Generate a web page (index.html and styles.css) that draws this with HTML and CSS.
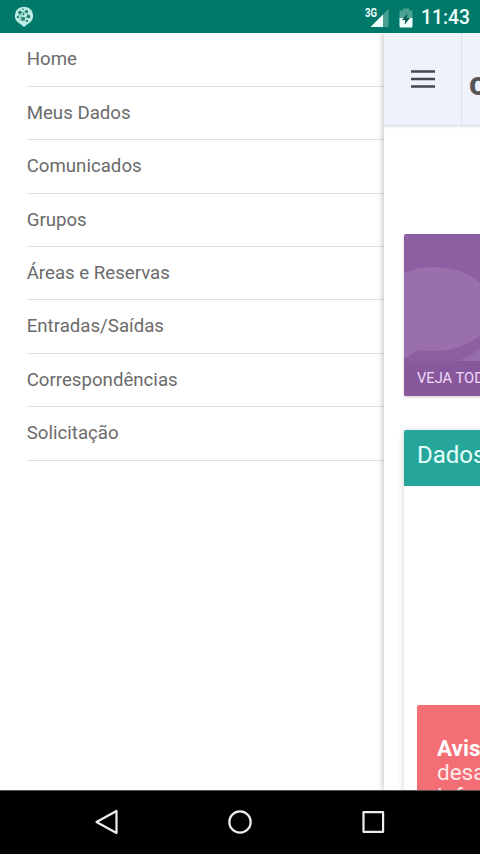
FILE: index.html
```html
<!DOCTYPE html>
<html lang="pt-BR">
<head>
<meta charset="utf-8">
<title>Menu</title>
<link rel="stylesheet" href="styles.css">
</head>
<body>
<div class="screen">
  <header class="status">
    <svg class="app-icon" width="20" height="22" viewBox="0 0 20 22">
      <path d="M10 .8a9 9 0 0 1 4.500 16.800L10 21l-4.500-3.400A9 9 0 0 1 10 .8z" fill="#b9eee5"/>
      <g fill="#17685e"><circle cx="6" cy="6.500" r="1.700"/><circle cx="12.500" cy="5.500" r="1.500"/><circle cx="14.500" cy="10.500" r="1.700"/><circle cx="9" cy="12.800" r="1.900"/><circle cx="3.800" cy="11" r="1.100"/><circle cx="13" cy="15" r="1"/><circle cx="9" cy="3.300" r=".8"/><circle cx="9.500" cy="8.300" r="1"/></g>
      <path d="M6 7l6-1.500 2.500 5-6 2zM4 11l4.500 1.500 4 2.500M6 7l-2 4M6 15l3-2" fill="none" stroke="#43998c" stroke-width=".7"/>
    </svg>
    <svg class="signal" width="26" height="22" viewBox="0 0 26 22">
      <path d="M23.500 2v18h-18z" fill="#4aa091"/>
      <path d="M18 7.500V20H5.500z" fill="#effffc"/>
      <text class="network" x="0" y="10" textLength="12" lengthAdjust="spacingAndGlyphs">3G</text>
    </svg>
    <svg class="battery" width="14" height="20" viewBox="0 0 14 20">
      <path d="M4 .5h6v2h3.500V11H.5V2.500H4z" fill="#4da292"/>
      <path d="M.5 10h13v8.500q0 1-1 1h-11q-1 0-1-1z" fill="#effffc"/>
      <path d="M8.500 5.200L3 12h3.300l-.8 4.800L11 10H7.700z" fill="#075e50"/>
    </svg>
    <time class="clock">11:43</time>
  </header>
  <div class="app">
    <nav class="drawer">
      <a class="item">Home</a>
      <a class="item">Meus Dados</a>
      <a class="item">Comunicados</a>
      <a class="item">Grupos</a>
      <a class="item">Áreas e Reservas</a>
      <a class="item">Entradas/Saídas</a>
      <a class="item">Correspondências</a>
      <a class="item">Solicitação</a>
    </nav>
    <main class="page">
      <div class="toolbar">
        <div class="menu-button">
          <svg width="24" height="18" viewBox="0 0 24 18"><path d="M0 1.500h24M0 9h24M0 16.500h24"/></svg>
        </div>
        <div class="brand">c</div>
      </div>
      <section class="tile">
        <svg class="bubbles" width="160" height="127" viewBox="0 0 160 127">
          <path d="M53 127C68 122 79 114 90 97l20 30z" fill="#986dac"/>
          <path d="M0 39C9 35 19 33 30 33c33 0 59 19 59 42s-26 42-59 42q-7 0-14-1C10 118 6 122 0 124z" fill="#9a70ac"/>
        </svg>
        <div class="tile-action">VEJA TODOS</div>
      </section>
      <section class="card">
        <h2 class="card-title">Dados</h2>
        <div class="notice"><b>Aviso</b><br>desatualizado<br>informe</div>
      </section>
    </main>
  </div>
  <footer class="navbar">
    <svg width="26" height="28" viewBox="0 0 26 28"><path d="M22.500 3v22L2.500 14z"/></svg>
    <svg width="26" height="28" viewBox="0 0 26 28"><circle cx="13" cy="14" r="10.700"/></svg>
    <svg width="26" height="28" viewBox="0 0 26 28"><path d="M3.500 4.200h19.600v19.600H3.500z"/></svg>
  </footer>
</div>
</body>
</html>
```
FILE: styles.css
```css
* { box-sizing: border-box; }
body { margin: 0; font-family: Roboto, "Liberation Sans", sans-serif; background: #fff; }
.screen { width: 480px; height: 854px; display: flex; flex-direction: column; overflow: hidden; }
.status { height: 33px; flex: none; background: #00796b; display: flex; align-items: center; padding: 0 10px 0 14px; }
.signal { margin-left: auto; overflow: visible; margin-top: 2px; }
.network { font-size: 12px; font-weight: 700; fill: #effffc; }
.battery { margin-left: 8px; margin-top: 2px; }
.clock { margin-left: 8px; width: 49px; color: #effffc; font-size: 19.300px; font-weight: 500; line-height: 33px; padding-top: 2px; white-space: nowrap; }
.app { flex: 1; min-height: 0; display: flex; overflow: hidden; }
.drawer { width: 384px; flex: none; padding: .4px 0 0 26.700px; }
.item { display: block; height: 53.400px; border-bottom: 1px solid #e0e0e0; font-size: 18.670px; line-height: 52px; color: #6b6b6b; white-space: nowrap; }
.page { width: 96px; flex: none; background: #fff; box-shadow: 0 0 7px rgba(0,0,0,.32); overflow: hidden; }
.toolbar { height: 93px; background: #eff1fb; border-bottom: 1px solid #dcdee7; box-shadow: 0 1px 3px rgba(0,0,0,.1); display: flex; }
.menu-button { width: 77px; flex: none; padding: 37px 0 0 27px; }
.menu-button svg { display: block; fill: none; stroke: #47474d; stroke-width: 2.500px; }
.brand { width: 60px; flex: none; border-left: 1px solid #dfe1ea; padding-left: 7px; font: 700 34px/100px Roboto, sans-serif; color: #56565a; }
.tile { width: 160px; height: 162px; margin: 108px 0 0 20px; border-radius: 2px; background: #8e5ea2; box-shadow: 0 1px 3px rgba(0,0,0,.2); overflow: hidden; }
.bubbles { display: block; }
.tile-action { height: 35px; padding-left: 13px; background: #88589d; color: #efd9f7; font-size: 14.670px; line-height: 35px; }
.card { width: 400px; height: 500px; margin: 34px 0 0 20px; border-radius: 2px; box-shadow: 0 1px 6px rgba(0,0,0,.2); }
.card-title { height: 56px; margin: 0; padding-left: 13px; border-radius: 2px 2px 0 0; background: #26a69a; color: #e7fffb; font-size: 24px; font-weight: 400; line-height: 51px; }
.notice { height: 200px; margin: 219px 0 0 13px; padding: 31px 20px; border-radius: 2px; background: #f46e76; color: #ffe9e9; font-size: 22.500px; line-height: 24px; }
.notice b { color: #fff; }
.navbar { height: 64px; flex: none; background: #000; border-top: 1px solid #555; display: flex; justify-content: space-between; padding: 17px 94px 0; }
.navbar svg { fill: none; stroke: #eee; stroke-width: 2.200px; stroke-linejoin: round; }
```
